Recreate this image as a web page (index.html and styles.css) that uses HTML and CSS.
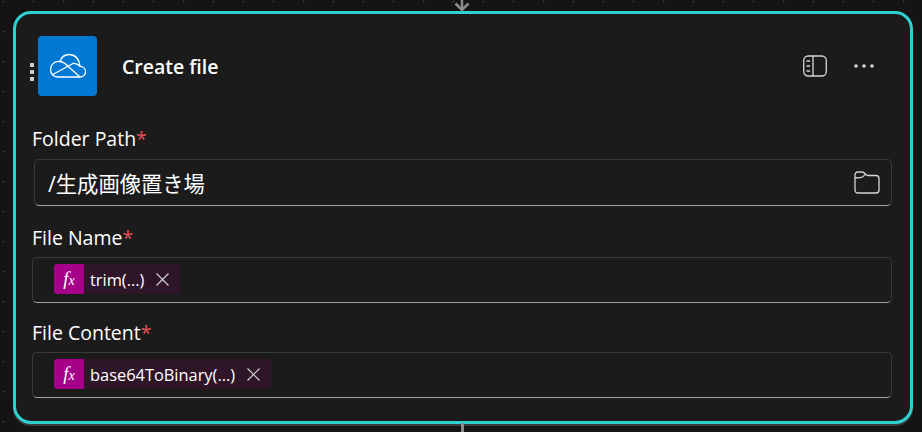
FILE: index.html
```html
<!DOCTYPE html>
<html lang="ja">
<head>
<meta charset="utf-8">
<title>Create file</title>
<link rel="stylesheet" href="styles.css">
</head>
<body>
<svg class="arrow-in" width="24" height="12" viewBox="0 0 24 12"><path d="M12 0V10M5.500 3.500L12 10L18.500 3.500" fill="none" stroke="#8a8a8a" stroke-width="2.500"/></svg>
<div class="connector-out"></div>
<main class="card">
  <header class="head">
    <div class="grip"><i></i><i></i><i></i></div>
    <div class="logo">
      <svg width="38" height="26" viewBox="0 0 38 26" fill="none" stroke="#fff" stroke-width="1.300" stroke-linejoin="round"><path d="M9 24H31.500C34.500 24 36.500 21.500 36.500 18.800C36.500 15.800 34.200 13.400 31 13.300C30 6 26 1.500 20 1.500C15.500 1.500 12.500 4 11 8.500C5 8 1.500 12 1.500 16.500C1.500 21 5 24 9 24Z"/><path d="M3.300 21.800L19 13.300L31 24M11 8.500C14 8.700 17 11 19 13.300L24 10.500C26.500 9.800 29 11.500 31 13.300"/></svg>
    </div>
    <h1 class="title">Create file</h1>
    <div class="actions">
      <svg width="26" height="22" viewBox="0 0 26 22" fill="none" stroke="#d6d6d6" stroke-width="1.300"><rect x="1.700" y="1" width="22.600" height="20" rx="4.500"/><path d="M11 1V21M4.500 6H8M4.500 11H8M4.500 16H8"/></svg>
      <svg class="more" width="20" height="4" viewBox="0 0 20 4" fill="#d6d6d6"><circle cx="2" cy="2" r="1.800"/><circle cx="10" cy="2" r="1.800"/><circle cx="18" cy="2" r="1.800"/></svg>
    </div>
  </header>
  <section class="field field-path">
    <label class="label">Folder Path<span class="req">*</span></label>
    <div class="input input-path">
      <span class="value">/生成画像置き場</span>
      <svg width="26" height="23" viewBox="0 0 26 23" fill="none" stroke="#d6d6d6" stroke-width="1.300"><path d="M1 6.500V4C1 2.200 2.200 1 4 1H8C9.500 1 10 1.500 11.500 3C12.500 4.200 13 4.500 14 4.500H22C24 4.500 25 5.800 25 7.500V19C25 20.800 24 22 22 22H4C2.200 22 1 20.800 1 19V6.500C5.500 7.500 9 6.800 11.500 3"/></svg>
    </div>
  </section>
  <section class="field field-name">
    <label class="label">File Name<span class="req">*</span></label>
    <div class="input">
      <span class="chip">
        <span class="fx"><em>f</em><em class="x">x</em></span>
        <span class="chip-text">trim(...)</span>
        <svg width="13" height="13" viewBox="0 0 13 13" stroke="#cfcfcf" stroke-width="1.200"><path d="M.5 .5L12.500 12.500M12.500 .5L.5 12.500"/></svg>
      </span>
    </div>
  </section>
  <section class="field">
    <label class="label">File Content<span class="req">*</span></label>
    <div class="input">
      <span class="chip">
        <span class="fx"><em>f</em><em class="x">x</em></span>
        <span class="chip-text">base64ToBinary(...)</span>
        <svg width="13" height="13" viewBox="0 0 13 13" stroke="#cfcfcf" stroke-width="1.200"><path d="M.5 .5L12.500 12.500M12.500 .5L.5 12.500"/></svg>
      </span>
    </div>
  </section>
</main>
</body>
</html>
```
FILE: styles.css
```css
* { box-sizing: border-box; }
html, body { margin: 0; height: 432px; overflow: hidden; }
body {
  position: relative;
  padding: 11px 9px 0 13px;
  background-color: #141414;
  background-image: radial-gradient(circle at 1.500px 1.500px, #4a4a4a 0, #4a4a4a .5px, transparent 1.200px);
  background-size: 30px 30px;
  background-position: 2px 0;
  font-family: "Open Sans", "Noto Sans CJK JP", sans-serif;
  color: #fff;
}
.arrow-in { position: absolute; left: 450px; top: 0; }
.connector-out { position: absolute; left: 461px; top: 423px; width: 3px; height: 9px; background: #8a8a8a; }
.card {
  width: 900px;
  height: 413px;
  border: 3px solid #2fd0d2;
  border-radius: 18px;
  background: #1b1b1b;
  box-shadow: 0 2px 0 #3c3c3c;
  padding: 22px 18px 0 16px;
}
.head { display: flex; align-items: center; height: 60px; margin-left: -2px; }
.grip { display: flex; flex-direction: column; gap: 3px; width: 8px; margin: 12px 0 0 0; }
.grip i { width: 4px; height: 4px; background: #d0d0d0; display: block; }
.logo {
  width: 59px; height: 60px;
  background: #0078d4; border-radius: 4px;
  display: flex; align-items: center; justify-content: center;
}
.title { margin: 1px 0 0 25px; font-size: 19.500px; font-weight: 600; line-height: 24px; }
.actions { margin-left: auto; display: flex; align-items: center; gap: 26px; padding-right: 18px; }
.field-path { margin-top: 31px; }
.label { display: block; font-size: 19.500px; line-height: 24px; height: 32px; }
.field:not(.field-path) .label { padding-top: 1px; }
.req { color: #e8525a; }
.input {
  height: 46px;
  border: 1px solid #3a3a3a;
  border-bottom-color: #a3a3a3;
  border-radius: 5px;
  display: flex;
  align-items: center;
  padding-left: 21px;
}
.input-path { height: 47px; margin-left: 2px; padding: 0 11px 0 13px; justify-content: space-between; margin-bottom: 19px; }
.field-name .input { margin-bottom: 17px; }
.value { font-size: 21.300px; }
.chip { display: inline-flex; align-items: center; height: 30px; margin-top: -2px; background: #2f1528; border-radius: 3px; padding-right: 11px; }
.fx {
  width: 30px; height: 30px; background: #a6008b; border-radius: 3px 0 0 3px;
  display: flex; align-items: center; justify-content: center;
  font-family: "Liberation Serif", serif; font-size: 19px;
}
.fx em { font-style: italic; }
.fx .x { font-size: 14px; margin-top: 3px; }
.chip-text { font-size: 16.400px; margin: 0 12px 0 6px; }
```
